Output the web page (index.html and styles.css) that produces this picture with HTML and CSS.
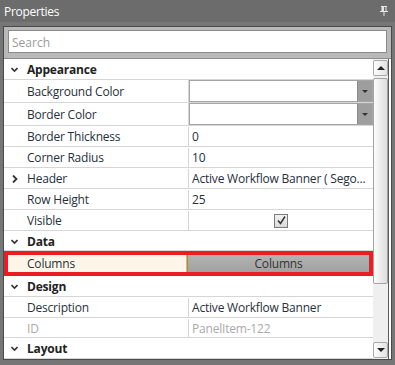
FILE: index.html
```html
<!DOCTYPE html>
<html lang="en">
<head>
  <meta charset="UTF-8">
  <title>Properties</title>
  <link rel="stylesheet" href="styles.css">
</head>
<body>
  <div class="titlebar">
    <span class="title">Properties</span>
    <svg class="pin" width="8" height="10" viewBox="0 0 8 10">
      <path d="M1 0.5h6M2 0.5v4.5M6 0.5v4.5M0 5.5h8M4 5.5v4.5" stroke="#e6e6e6" stroke-width="1" fill="none"/>
      <rect x="2" y="0.5" width="2" height="4.5" fill="#e6e6e6"/>
    </svg>
  </div>

  <div class="panel">
    <div class="search-wrap">
      <input class="search" type="text" placeholder="Search">
    </div>

    <div class="grid-area">
      <div class="grid">
        <div class="row cat">
          <svg class="chev" width="7" height="7" viewBox="0 0 7 7"><polyline points="0.5,2 3.5,5 6.5,2" stroke="#333" stroke-width="1.6" fill="none"/></svg>
          <span>Appearance</span>
        </div>
        <div class="row prop tall">
          <div class="name">Background Color</div>
          <div class="value"><div class="combo"><span class="combo-btn"></span></div></div>
        </div>
        <div class="row prop tall">
          <div class="name">Border Color</div>
          <div class="value"><div class="combo"><span class="combo-btn"></span></div></div>
        </div>
        <div class="row prop">
          <div class="name">Border Thickness</div>
          <div class="value">0</div>
        </div>
        <div class="row prop">
          <div class="name">Corner Radius</div>
          <div class="value">10</div>
        </div>
        <div class="row prop">
          <div class="name has-chev">
            <svg class="chev" width="7" height="8" viewBox="0 0 7 8"><polyline points="2,0.5 5.5,4 2,7.5" stroke="#333" stroke-width="1.8" fill="none"/></svg>
            Header
          </div>
          <div class="value">Active Workflow Banner ( Sego...</div>
        </div>
        <div class="row prop">
          <div class="name">Row Height</div>
          <div class="value">25</div>
        </div>
        <div class="row prop">
          <div class="name">Visible</div>
          <div class="value center">
            <span class="check">
              <svg width="9" height="9" viewBox="0 0 9 9"><polyline points="1,4.5 3.5,7.5 8,0.5" stroke="#333" stroke-width="1.5" fill="none"/></svg>
            </span>
          </div>
        </div>
        <div class="row cat short">
          <svg class="chev" width="7" height="7" viewBox="0 0 7 7"><polyline points="0.5,2 3.5,5 6.5,2" stroke="#333" stroke-width="1.6" fill="none"/></svg>
          <span>Data</span>
        </div>
        <div class="row prop selected">
          <div class="name">Columns</div>
          <div class="value"><div class="cell-btn">Columns</div></div>
        </div>
        <div class="row cat">
          <svg class="chev" width="7" height="7" viewBox="0 0 7 7"><polyline points="0.5,2 3.5,5 6.5,2" stroke="#333" stroke-width="1.6" fill="none"/></svg>
          <span>Design</span>
        </div>
        <div class="row prop">
          <div class="name">Description</div>
          <div class="value">Active Workflow Banner</div>
        </div>
        <div class="row prop short readonly">
          <div class="name">ID</div>
          <div class="value">PanelItem-122</div>
        </div>
        <div class="row cat">
          <svg class="chev" width="7" height="7" viewBox="0 0 7 7"><polyline points="0.5,2 3.5,5 6.5,2" stroke="#333" stroke-width="1.6" fill="none"/></svg>
          <span>Layout</span>
        </div>
      </div>

      <div class="scrollbar">
        <div class="sb-btn"><span class="tri up"></span></div>
        <div class="sb-thumb"></div>
        <div class="sb-space"></div>
        <div class="sb-btn"><span class="tri down"></span></div>
      </div>
    </div>
  </div>
</body>
</html>
```

FILE: styles.css
```css
body {
  margin: 0;
  background: #767676;
  font-family: 'Open Sans', 'Noto Sans', sans-serif;
  font-size: 12px;
  letter-spacing: -0.2px;
  color: #27303c;
  width: 395px;
  height: 365px;
  overflow: hidden;
}
.titlebar {
  height: 22px;
  background: #6c6c6c;
  display: flex;
  align-items: center;
  justify-content: space-between;
  padding: 0 7px 0 4px;
}
.title {
  color: #fff;
  font-size: 12px;
  letter-spacing: -0.3px;
}
.pin {
  display: block;
}
.panel {
  margin: 4px 3px 0 3px;
  border: 1px solid #4a4a4a;
  background: #b9b9b9;
}
.search-wrap {
  padding: 3px 4px 5px 4px;
  border-bottom: 1px solid #8c8c8c;
}
.search {
  display: block;
  box-sizing: border-box;
  width: 100%;
  height: 23px;
  border: 1px solid #8a8a8a;
  padding: 1px 3px 0;
  font-family: 'Open Sans', 'Noto Sans', sans-serif;
  font-size: 12px;
  outline: none;
}
.search::placeholder {
  color: #9b9b9b;
}
.grid-area {
  display: flex;
  background: #fff;
  height: 300px;
}
.grid {
  width: 369px;
}
.row {
  display: flex;
  box-sizing: border-box;
  height: 21px;
  padding-top: 1px;
  border-bottom: 1px solid #d6d6d6;
  background: #fff;
}
.row.tall {
  height: 23px;
  padding-top: 0;
}
.row.short {
  height: 20px;
}
.cat {
  align-items: center;
  padding-left: 7px;
  font-weight: bold;
  color: #222;
}
.chev {
  display: block;
  flex: none;
  margin-right: 9px;
}
.name {
  box-sizing: border-box;
  width: 185px;
  padding-left: 23px;
  border-right: 1px solid #d6d6d6;
  display: flex;
  align-items: center;
  white-space: nowrap;
}
.name.has-chev {
  padding-left: 7px;
}
.value {
  flex: 1;
  display: flex;
  align-items: center;
  padding-left: 3px;
  white-space: nowrap;
  overflow: hidden;
}
.value.center {
  justify-content: center;
  padding-left: 0;
}
.readonly {
  color: #a9a9a9;
}
.tall .value {
  padding-left: 0;
  align-items: stretch;
}
.combo {
  flex: 1;
  display: flex;
  justify-content: flex-end;
  border: 1px solid #a5a5a5;
  background: #fff;
}
.combo-btn {
  width: 14px;
  background: #9e9e9e;
  border-left: 1px solid #8a8a8a;
  display: flex;
  align-items: center;
  justify-content: center;
}
.combo-btn::after {
  content: "";
  border-left: 3px solid transparent;
  border-right: 3px solid transparent;
  border-top: 3px solid #333;
}
.check {
  box-sizing: border-box;
  width: 14px;
  height: 14px;
  border: 1px solid #7b7b7b;
  background: linear-gradient(#f2f2f2, #d9d9d9);
  display: flex;
  align-items: center;
  justify-content: center;
}
.check svg {
  display: block;
}
.row.selected {
  height: 25px;
  padding-top: 0;
  border: 4px solid #ec1c24;
}
.selected .name {
  width: 179px;
  padding-left: 19px;
  background: #fdf6e8;
  border-right: 1px solid #efb430;
}
.selected .value {
  padding-left: 0;
  align-items: stretch;
}
.cell-btn {
  flex: 1;
  display: flex;
  align-items: center;
  justify-content: center;
  background: linear-gradient(#b3b3b3, #a1a1a1);
  border-left: 1px solid #8e8e8e;
  color: #333;
}
.scrollbar {
  width: 16px;
  background: #efefef;
  display: flex;
  flex-direction: column;
  padding: 1px 0;
  box-sizing: border-box;
  border-right: 1px solid #5a5a5a;
}
.sb-btn {
  box-sizing: border-box;
  height: 16px;
  border: 1px solid #a9a9a9;
  border-radius: 2px;
  background: linear-gradient(90deg, #fdfdfd, #e2e2e2);
  display: flex;
  align-items: center;
  justify-content: center;
}
.sb-thumb {
  box-sizing: border-box;
  height: 206px;
  margin-top: 2px;
  border: 1px solid #a3a3a3;
  border-radius: 2px;
  background: linear-gradient(90deg, #fcfcfc, #dcdcdc);
}
.sb-space {
  flex: 1;
}
.tri {
  border-left: 4px solid transparent;
  border-right: 4px solid transparent;
}
.tri.up {
  border-bottom: 4px solid #222;
}
.tri.down {
  border-top: 4px solid #222;
}
```
